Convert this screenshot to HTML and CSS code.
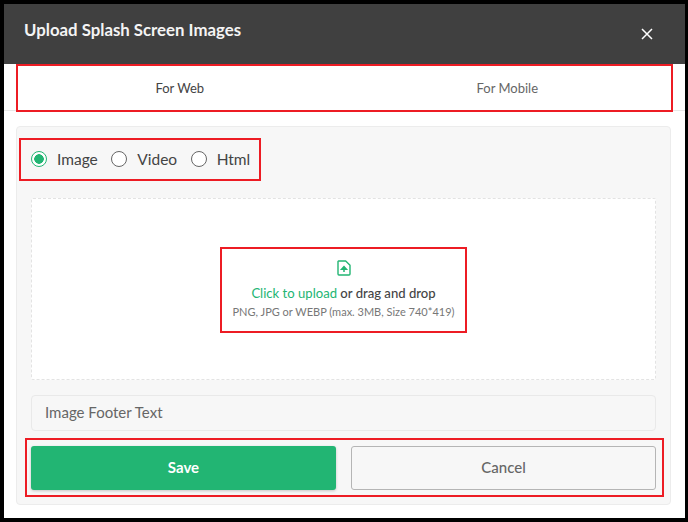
FILE: index.html
```html
<!DOCTYPE html>
<html lang="en">
<head>
<meta charset="utf-8">
<title>Upload Splash Screen Images</title>
<link rel="stylesheet" href="styles.css">
</head>
<body>
<div class="modal">
  <header class="head">
    <h1 class="title">Upload Splash Screen Images</h1>
    <svg class="close" width="12" height="12" viewBox="0 0 12 12"><path d="M1 1l10 10M11 1L1 11" stroke="#fff" stroke-width="1.5" fill="none"/></svg>
  </header>
  <nav class="tabs">
    <div class="tab tab-on">For Web</div>
    <div class="tab">For Mobile</div>
  </nav>
  <main class="wrap">
    <section class="panel">
      <div class="radios">
        <label class="radio"><span class="dot dot-on"></span>Image</label>
        <label class="radio"><span class="dot"></span>Video</label>
        <label class="radio"><span class="dot"></span>Html</label>
      </div>
      <div class="drop">
        <svg class="file" width="14" height="16" viewBox="0 0 14 16"><path d="M1.5 1h7.2L13 5.2V14a1 1 0 0 1-1 1H2a1 1 0 0 1-1-1V1.5z" fill="none" stroke="#22b573" stroke-width="1.4" stroke-linejoin="round"/><path d="M7 12V8M4.6 9.2L7 6.6l2.4 2.6z" stroke="#22b573" stroke-width="1.5" fill="#22b573"/></svg>
        <p class="drop-main"><span class="link">Click to upload</span> or drag and drop</p>
        <p class="drop-sub">PNG, JPG or WEBP (max. 3MB, Size 740*419)</p>
      </div>
      <div class="field">Image Footer Text</div>
      <div class="actions">
        <button class="btn btn-save">Save</button>
        <button class="btn btn-cancel">Cancel</button>
      </div>
    </section>
  </main>
</div>
<div class="mark mark-tabs"></div>
<div class="mark mark-radios"></div>
<div class="mark mark-drop"></div>
<div class="mark mark-actions"></div>
</body>
</html>
```
FILE: styles.css
```css
* { box-sizing: border-box; }
html, body { margin: 0; height: 100%; }
body {
  background: #000;
  padding: 4px 3px 4px 4px;
  font-family: "Lato", "Liberation Sans", sans-serif;
  overflow: hidden;
  position: relative;
}
.modal { background: #fff; height: 514px; display: flex; flex-direction: column; }
.head {
  height: 60px;
  background: #404040;
  display: flex;
  justify-content: space-between;
  padding: 16px 32px 0 20px;
  flex: none;
}
.title { margin: 0; font-size: 16.8px; line-height: 20px; font-weight: 700; color: #f4f4f4; }
.close { margin-top: 8px; }
.tabs { height: 47px; display: flex; border-bottom: 1px solid #e8e8e8; padding: 2px 14px 0 12px; flex: none; }
.tab { flex: 1; display: flex; align-items: center; justify-content: center; font-size: 13px; color: #666; }
.tab-on { color: #444; }
.wrap { padding: 15px 14px 13px 12px; flex: 1; display: flex; }
.panel {
  flex: 1;
  background: #f7f7f7;
  border: 1px solid #ececec;
  border-radius: 4px;
  padding: 21px 14px 0 14px;
  display: flex;
  flex-direction: column;
}
.radios { display: flex; gap: 13.5px; height: 21px; }
.radio { display: flex; align-items: center; gap: 10px; font-size: 15.5px; color: #444; }
.dot { width: 16px; height: 16px; border-radius: 50%; border: 1.5px solid #666; flex: none; background: #fff; }
.dot-on { border-color: #22b573; background: radial-gradient(circle, #22b573 0 4.5px, #fff 5px); }
.drop {
  margin-top: 29px;
  height: 182px;
  background: #fff;
  border: 1px dashed #e3e3e3;
  border-radius: 2px;
  display: flex;
  flex-direction: column;
  align-items: center;
  padding-top: 61px;
}
.file { display: block; }
.drop-main { margin: 8px 0 0; font-size: 13.1px; line-height: 18px; color: #444; font-weight: 500; }
.link { color: #22b573; font-weight: 400; }
.drop-sub { margin: 2px 0 0; font-size: 11px; line-height: 16px; color: #777; }
.field {
  margin-top: 15px;
  height: 36px;
  border: 1px solid #e9e9e9;
  border-radius: 4px;
  padding: 0 13px 2px;
  display: flex;
  align-items: center;
  font-size: 15px;
  color: #666;
}
.actions { margin-top: 15px; display: grid; grid-template-columns: 1fr 1fr; gap: 15px; }
.btn { height: 44px; border-radius: 3px; font: inherit; font-size: 15px; padding: 0 0 2px; cursor: pointer; }
.btn-save { background: #22b573; color: #fff; border: 0; font-weight: 700; box-shadow: 0 1px 3px rgba(0,0,0,.2); }
.btn-cancel { background: #f7f7f7; color: #666; border: 1px solid #b5b5b5; font-weight: 500; }
.mark { position: absolute; border: 2px solid #ed1c24; pointer-events: none; }
.mark-tabs { left: 16px; top: 64px; width: 657px; height: 48px; }
.mark-radios { left: 19px; top: 138px; width: 242px; height: 43px; }
.mark-drop { left: 220px; top: 247px; width: 247px; height: 86px; }
.mark-actions { left: 25px; top: 438px; width: 639px; height: 59px; }
```
